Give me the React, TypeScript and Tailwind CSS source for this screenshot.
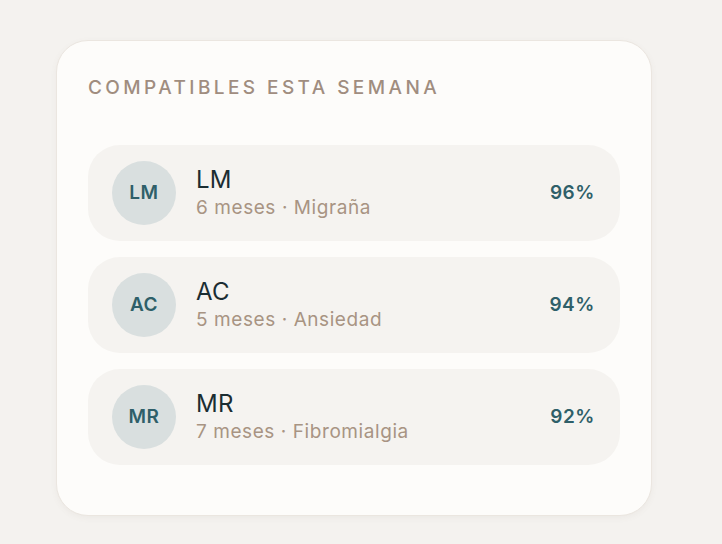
const matches = [
  { initials: "LM", months: "6 meses", condition: "Migraña", score: 96 },
  { initials: "AC", months: "5 meses", condition: "Ansiedad", score: 94 },
  { initials: "MR", months: "7 meses", condition: "Fibromialgia", score: 92 },
];

export default function App() {
  return (
    <div className="min-h-[544px] w-full bg-[#f4f2ef] pt-[40px] pl-[56px] font-['Inter',sans-serif]">
      <div className="w-[596px] rounded-[32px] border border-[#ebe6e0] bg-[#fdfcfa] px-[31px] pt-[31px] pb-[50px] shadow-[0_2px_6px_rgba(120,100,80,0.06)]">
        <h2 className="text-[19px] leading-[32px] font-medium tracking-[0.18em] text-[#a08d7f]">
          COMPATIBLES ESTA SEMANA
        </h2>
        <div className="mt-[41px] flex flex-col gap-[16px]">
          {matches.map((m) => (
            <div
              key={m.initials}
              className="flex h-[96px] items-center rounded-[32px] bg-[#f5f3f0] pl-[24px] pr-[25px]"
            >
              <div className="flex h-[64px] w-[64px] items-center justify-center rounded-full bg-[#d9dfdf] text-[19px] font-semibold tracking-[0.03em] text-[#2f5f69]">
                {m.initials}
              </div>
              <div className="ml-[20px] flex-1 pt-[1px]">
                <div className="text-[24px] leading-[28px] tracking-[0.01em] text-[#1b2d32]">{m.initials}</div>
                <div className="text-[19px] leading-[28px] tracking-[0.03em] text-[#a89483]">
                  {m.months} · {m.condition}
                </div>
              </div>
              <div className="text-[19px] font-semibold tracking-[0.03em] text-[#2f5f69]">{m.score}%</div>
            </div>
          ))}
        </div>
      </div>
    </div>
  );
}
